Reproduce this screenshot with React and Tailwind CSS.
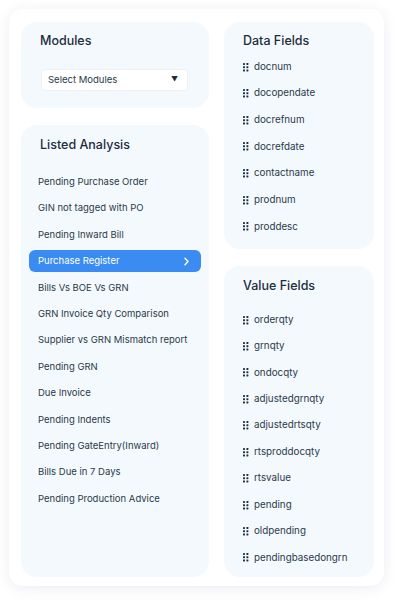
import React from "react";

const analyses = [
  "Pending Purchase Order",
  "GIN not tagged with PO",
  "Pending Inward Bill",
  "Purchase Register",
  "Bills Vs BOE Vs GRN",
  "GRN Invoice Qty Comparison",
  "Supplier vs GRN Mismatch report",
  "Pending GRN",
  "Due Invoice",
  "Pending Indents",
  "Pending GateEntry(Inward)",
  "Bills Due in 7 Days",
  "Pending Production Advice",
];

const dataFields = ["docnum", "docopendate", "docrefnum", "docrefdate", "contactname", "prodnum", "proddesc"];

const valueFields = [
  "orderqty",
  "grnqty",
  "ondocqty",
  "adjustedgrnqty",
  "adjustedrtsqty",
  "rtsproddocqty",
  "rtsvalue",
  "pending",
  "oldpending",
  "pendingbasedongrn",
];

function Grip() {
  return (
    <svg width="6" height="9" viewBox="0 0 6 9" className="shrink-0">
      {[0, 1].map((c) =>
        [0, 1, 2].map((r) => <rect key={`${c}${r}`} x={c * 3.4} y={r * 3.2} width="2" height="2" rx="0.4" fill="#22313f" />)
      )}
    </svg>
  );
}

function FieldList({ items, gap }) {
  return (
    <div className={`flex flex-col ${gap}`}>
      {items.map((f) => (
        <div key={f} className="h-[20px] flex items-center gap-[5px] text-[9.8px] text-[#2a3a48]">
          <Grip />
          <span>{f}</span>
        </div>
      ))}
    </div>
  );
}

export default function App() {
  return (
    <div className="w-[404px] h-[606px] bg-white pt-[9px] pl-[9px]" style={{ fontFamily: "Inter, 'Open Sans', sans-serif" }}>
      <div className="w-[375px] h-[577px] bg-white rounded-[14px] shadow-[0_2px_14px_rgba(120,130,170,0.14)] pt-[13px] pl-[12px] flex gap-[15px]">
        {/* left column */}
        <div className="w-[188px] flex flex-col gap-[17px]">
          <div className="h-[86px] bg-[#f4f9fe] rounded-[16px] pt-[9px] pl-[19px] pr-[21px]">
            <h3 className="text-[12.5px] leading-[20px] font-medium text-[#1d2d3b]">Modules</h3>
            <div className="mt-[18px] ml-px h-[22px] bg-white rounded-[4px] border border-[#eef1f5] flex items-center justify-between pl-[6px] pr-[9px] text-[9.5px] text-[#2a3a48]">
              <span>Select Modules</span>
              <span className="text-[7px] text-[#1d2d3b]">▼</span>
            </div>
          </div>

          <div className="h-[452px] bg-[#f4f9fe] rounded-[16px] pt-[10px] px-[8px]">
            <h3 className="pl-[11px] text-[12.5px] leading-[20px] font-medium text-[#1d2d3b]">Listed Analysis</h3>
            <div className="mt-[16px] flex flex-col gap-[4.42px]">
              {analyses.map((a) =>
                a === "Purchase Register" ? (
                  <div key={a} className="h-[22px] rounded-[6px] bg-[#3a8cf2] flex items-center justify-between pl-[9px] pr-[11px] text-[9.5px] text-white">
                    <span>{a}</span>
                    <svg width="7" height="9" viewBox="0 0 7 9">
                      <path d="M2 1.2 L5 4.5 L2 7.8" fill="none" stroke="white" strokeWidth="1.4" strokeLinecap="round" strokeLinejoin="round" />
                    </svg>
                  </div>
                ) : (
                  <div key={a} className="h-[22px] flex items-center pl-[9px] text-[9.5px] text-[#2a3a48]">
                    {a}
                  </div>
                )
              )}
            </div>
          </div>
        </div>

        {/* right column */}
        <div className="w-[150px] flex flex-col gap-[17px]">
          <div className="h-[227px] bg-[#f4f9fe] rounded-[16px] pt-[9px] pl-[19px]">
            <h3 className="text-[12.5px] leading-[20px] font-medium text-[#1d2d3b]">Data Fields</h3>
            <div className="mt-[6px]">
              <FieldList items={dataFields} gap="gap-[6.67px]" />
            </div>
          </div>
          <div className="h-[311px] bg-[#f4f9fe] rounded-[16px] pt-[10px] pl-[19px]">
            <h3 className="text-[12.5px] leading-[20px] font-medium text-[#1d2d3b]">Value Fields</h3>
            <div className="mt-[14px]">
              <FieldList items={valueFields} gap="gap-[6.44px]" />
            </div>
          </div>
        </div>
      </div>
    </div>
  );
}
